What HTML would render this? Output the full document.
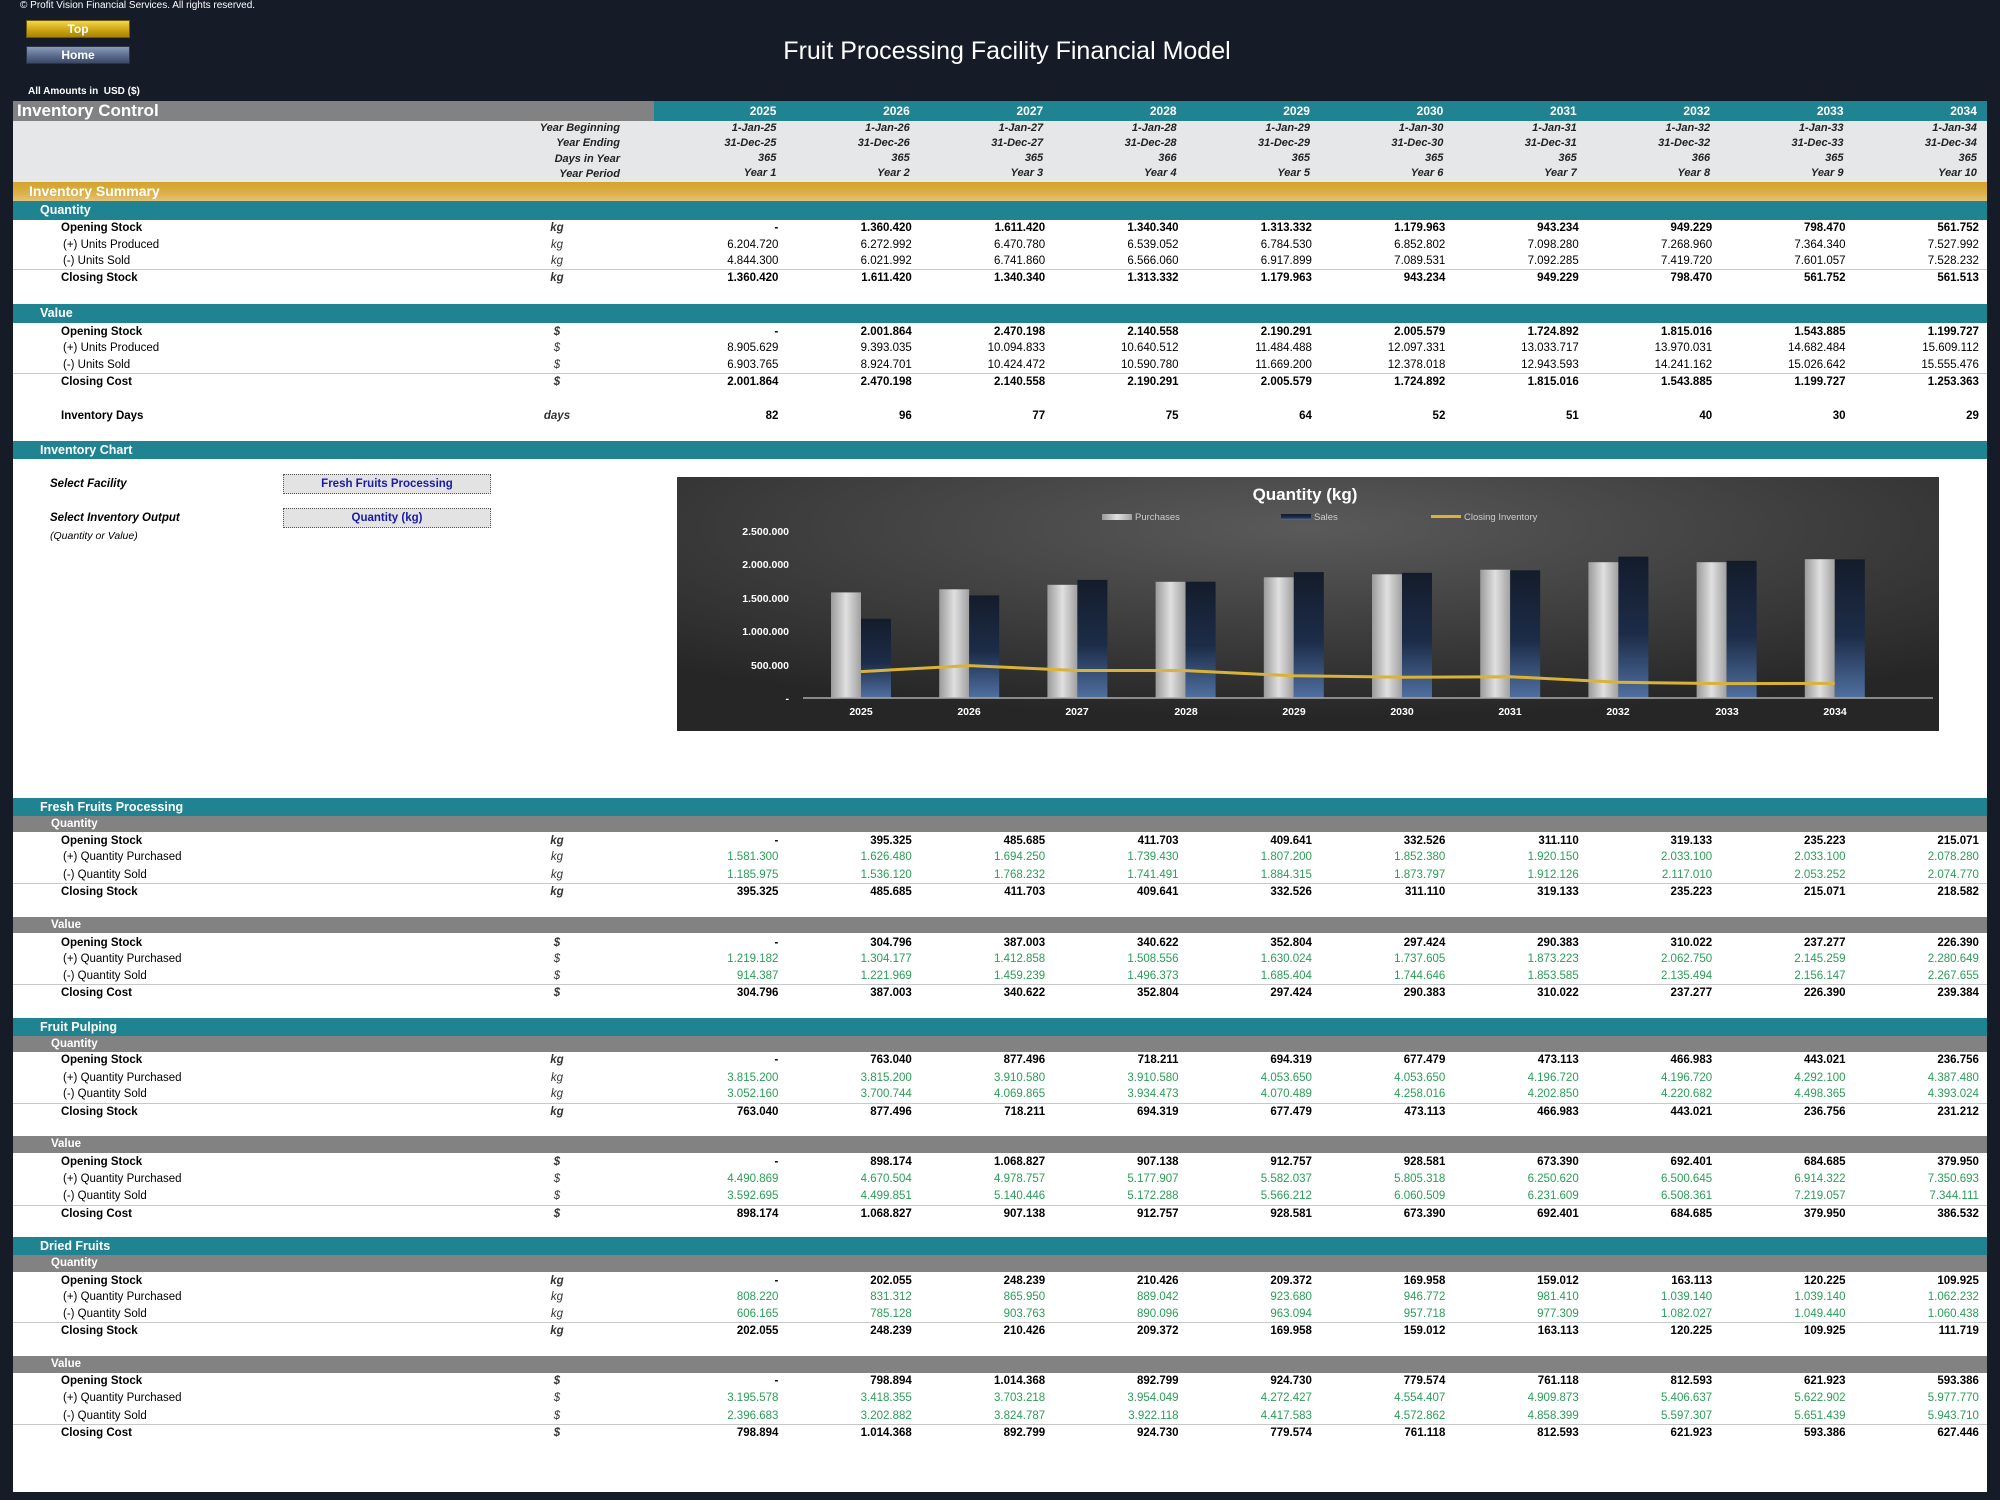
<!DOCTYPE html>
<html><head><meta charset="utf-8"><style>
*{margin:0;padding:0;box-sizing:border-box}
body{width:2000px;height:1500px;background:#151b27;font-family:"Liberation Sans",sans-serif;position:relative;overflow:hidden;color:#000}
.a{position:absolute}
#page{position:absolute;left:13px;top:101px;width:1974px;height:1391px;background:#fff}
.bar{position:absolute;left:13px;width:1974px;color:#fff;font-weight:bold}
.teal{background:#1f8391}
.gray{background:#828282}
.r{position:absolute;left:13px;width:1974px;height:17px;line-height:17px;font-size:11.5px}
.r .l{position:absolute;left:48px}
.r .i{left:50px}
.r .u{position:absolute;left:534px;width:20px;text-align:center;font-style:italic;color:#333}
.r .n{position:absolute;left:634px;display:grid;grid-template-columns:repeat(10,133.4px)}
.r .n span{text-align:right;padding-right:2px}
.b{font-weight:bold}
.g .n span{color:#2a9d57}
.ln{border-top:1px solid #c8c8c8}
.hd{position:absolute;left:634px;display:grid;grid-template-columns:repeat(10,133.4px);font-style:italic;font-weight:bold;font-size:11px;color:#222}
.hd span{text-align:right;padding-right:4px}
</style></head><body>
<div class="a" style="left:20px;top:0;font-size:10px;color:#fff">© Profit Vision Financial Services. All rights reserved.</div>
<div class="a" style="left:26px;top:20px;width:104px;height:18px;background:linear-gradient(#f6d64a,#c9a010 60%,#a88308);border:1px solid #6b5a10;color:#fff;font-weight:bold;font-size:12px;text-align:center;line-height:17px">Top</div>
<div class="a" style="left:26px;top:46px;width:104px;height:18px;background:linear-gradient(#8b9bb8,#56678a 60%,#3b4966);border:1px solid #2a3448;color:#fff;font-weight:bold;font-size:12px;text-align:center;line-height:17px">Home</div>
<div class="a" style="left:0;width:2000px;top:37px;text-align:center;font-size:25px;color:#fff;padding-left:14px">Fruit Processing Facility Financial Model</div>
<div class="a" style="left:28px;top:86px;font-size:10px;color:#fff;font-weight:bold">All Amounts in&nbsp; USD ($)</div>
<div id="page"></div>

<div class="bar gray" style="top:101px;height:20px;width:641px;font-size:17px;line-height:20px;padding-left:4px">Inventory Control</div>
<div class="bar teal" style="top:101px;height:20px;left:654px;width:1333px"></div>
<div class="hd" style="left:647px;top:101px;line-height:20px;color:#fff;font-style:normal;font-size:12px"><span>2025</span><span>2026</span><span>2027</span><span>2028</span><span>2029</span><span>2030</span><span>2031</span><span>2032</span><span>2033</span><span>2034</span></div>
<div class="a" style="left:13px;top:121px;width:1974px;height:61px;background:#e6e7e9"></div>
<div class="a" style="left:400px;top:121px;width:220px;text-align:right;font-style:italic;font-weight:bold;font-size:11px;line-height:15.3px;color:#222">Year Beginning<br>Year Ending<br>Days in Year<br>Year Period</div>
<div class="hd" style="left:647px;top:121px;line-height:15.3px"><span>1-Jan-25</span><span>1-Jan-26</span><span>1-Jan-27</span><span>1-Jan-28</span><span>1-Jan-29</span><span>1-Jan-30</span><span>1-Jan-31</span><span>1-Jan-32</span><span>1-Jan-33</span><span>1-Jan-34</span></div>
<div class="hd" style="left:647px;top:136px;line-height:15.3px"><span>31-Dec-25</span><span>31-Dec-26</span><span>31-Dec-27</span><span>31-Dec-28</span><span>31-Dec-29</span><span>31-Dec-30</span><span>31-Dec-31</span><span>31-Dec-32</span><span>31-Dec-33</span><span>31-Dec-34</span></div>
<div class="hd" style="left:647px;top:151px;line-height:15.3px"><span>365</span><span>365</span><span>365</span><span>366</span><span>365</span><span>365</span><span>365</span><span>366</span><span>365</span><span>365</span></div>
<div class="hd" style="left:647px;top:166px;line-height:15.3px"><span>Year 1</span><span>Year 2</span><span>Year 3</span><span>Year 4</span><span>Year 5</span><span>Year 6</span><span>Year 7</span><span>Year 8</span><span>Year 9</span><span>Year 10</span></div>

<div class="bar" style="top:182px;height:19px;background:linear-gradient(#d4a32a,#dcb04a 60%,#e3c27a);font-size:14px;line-height:19px;padding-left:16px">Inventory Summary</div>
<div class="bar teal" style="top:201px;height:19px;font-size:12.5px;line-height:19px;padding-left:27px">Quantity</div>
<div class="r b" style="top:220px"><span class="l">Opening Stock</span><span class="u">kg</span><div class="n"><span>-</span><span>1.360.420</span><span>1.611.420</span><span>1.340.340</span><span>1.313.332</span><span>1.179.963</span><span>943.234</span><span>949.229</span><span>798.470</span><span>561.752</span></div></div>
<div class="r" style="top:237px"><span class="l i">(+) Units Produced</span><span class="u">kg</span><div class="n"><span>6.204.720</span><span>6.272.992</span><span>6.470.780</span><span>6.539.052</span><span>6.784.530</span><span>6.852.802</span><span>7.098.280</span><span>7.268.960</span><span>7.364.340</span><span>7.527.992</span></div></div>
<div class="r" style="top:253px"><span class="l i">(-) Units Sold</span><span class="u">kg</span><div class="n"><span>4.844.300</span><span>6.021.992</span><span>6.741.860</span><span>6.566.060</span><span>6.917.899</span><span>7.089.531</span><span>7.092.285</span><span>7.419.720</span><span>7.601.057</span><span>7.528.232</span></div></div>
<div class="r b ln" style="top:269px"><span class="l">Closing Stock</span><span class="u">kg</span><div class="n"><span>1.360.420</span><span>1.611.420</span><span>1.340.340</span><span>1.313.332</span><span>1.179.963</span><span>943.234</span><span>949.229</span><span>798.470</span><span>561.752</span><span>561.513</span></div></div>

<div class="bar teal" style="top:304px;height:19px;font-size:12.5px;line-height:19px;padding-left:27px">Value</div>
<div class="r b" style="top:324px"><span class="l">Opening Stock</span><span class="u">$</span><div class="n"><span>-</span><span>2.001.864</span><span>2.470.198</span><span>2.140.558</span><span>2.190.291</span><span>2.005.579</span><span>1.724.892</span><span>1.815.016</span><span>1.543.885</span><span>1.199.727</span></div></div>
<div class="r" style="top:340px"><span class="l i">(+) Units Produced</span><span class="u">$</span><div class="n"><span>8.905.629</span><span>9.393.035</span><span>10.094.833</span><span>10.640.512</span><span>11.484.488</span><span>12.097.331</span><span>13.033.717</span><span>13.970.031</span><span>14.682.484</span><span>15.609.112</span></div></div>
<div class="r" style="top:357px"><span class="l i">(-) Units Sold</span><span class="u">$</span><div class="n"><span>6.903.765</span><span>8.924.701</span><span>10.424.472</span><span>10.590.780</span><span>11.669.200</span><span>12.378.018</span><span>12.943.593</span><span>14.241.162</span><span>15.026.642</span><span>15.555.476</span></div></div>
<div class="r b ln" style="top:373px"><span class="l">Closing Cost</span><span class="u">$</span><div class="n"><span>2.001.864</span><span>2.470.198</span><span>2.140.558</span><span>2.190.291</span><span>2.005.579</span><span>1.724.892</span><span>1.815.016</span><span>1.543.885</span><span>1.199.727</span><span>1.253.363</span></div></div>
<div class="r b" style="top:408px"><span class="l">Inventory Days</span><span class="u" style="font-weight:bold;left:527px;width:34px">days</span><div class="n"><span>82</span><span>96</span><span>77</span><span>75</span><span>64</span><span>52</span><span>51</span><span>40</span><span>30</span><span>29</span></div></div>

<div class="bar teal" style="top:441px;height:18px;font-size:12.5px;line-height:18px;padding-left:27px">Inventory Chart</div>
<div class="a" style="left:50px;top:478px;font-size:11.5px;font-weight:bold;font-style:italic">Select Facility</div>
<div class="a" style="left:283px;top:474px;width:208px;height:20px;background:#e3e3e3;border:1px dotted #555;color:#1a1aa8;font-weight:bold;font-size:11.5px;text-align:center;line-height:18px">Fresh Fruits Processing</div>
<div class="a" style="left:50px;top:512px;font-size:11.5px;font-weight:bold;font-style:italic">Select Inventory Output</div>
<div class="a" style="left:50px;top:530px;font-size:10.5px;font-style:italic">(Quantity or Value)</div>
<div class="a" style="left:283px;top:508px;width:208px;height:20px;background:#e3e3e3;border:1px dotted #555;color:#1a1aa8;font-weight:bold;font-size:11.5px;text-align:center;line-height:18px">Quantity (kg)</div>

<svg class="a" style="left:677px;top:477px" width="1262" height="254" viewBox="0 0 1262 254">
<defs>
<radialGradient id="bg" cx="50%" cy="20%" r="75%"><stop offset="0" stop-color="#5a5a5a"/><stop offset="1" stop-color="#262626"/></radialGradient>
<linearGradient id="pg" x1="0" x2="1"><stop offset="0" stop-color="#9a9a9a"/><stop offset=".5" stop-color="#e0e0e0"/><stop offset="1" stop-color="#a0a0a0"/></linearGradient>
<linearGradient id="sg" x1="0" y1="0" x2="0" y2="1"><stop offset="0" stop-color="#141c2a"/><stop offset=".55" stop-color="#1c2c48"/><stop offset="1" stop-color="#5070a0"/></linearGradient>
</defs>
<rect width="1262" height="254" fill="url(#bg)"/>
<text x="628" y="23" text-anchor="middle" fill="#fff" font-size="17" font-weight="bold">Quantity (kg)</text>
<rect x="425" y="37" width="30" height="6" fill="url(#pg)"/><text x="458" y="43" fill="#ccc" font-size="9.5">Purchases</text>
<rect x="604" y="37" width="30" height="6" fill="url(#sg)"/><text x="637" y="43" fill="#ccc" font-size="9.5">Sales</text>
<rect x="754" y="38" width="30" height="3" fill="#d9b23a"/><text x="787" y="43" fill="#ccc" font-size="9.5">Closing Inventory</text>
<g fill="#fff" font-size="10.5" font-weight="bold" text-anchor="end">
<text x="112" y="58">2.500.000</text><text x="112" y="91">2.000.000</text><text x="112" y="125">1.500.000</text><text x="112" y="158">1.000.000</text><text x="112" y="192">500.000</text><text x="112" y="225">-</text></g>
<g fill="url(#pg)">
<rect x="154" y="115.4" width="30" height="105.6"/><rect x="262.2" y="112.3" width="30" height="108.7"/><rect x="370.4" y="107.8" width="30" height="113.2"/><rect x="478.6" y="104.8" width="30" height="116.2"/><rect x="586.8" y="100.3" width="30" height="120.7"/><rect x="695" y="97.3" width="30" height="123.7"/><rect x="803.2" y="92.7" width="30" height="128.3"/><rect x="911.4" y="85.2" width="30" height="135.8"/><rect x="1019.6" y="85.2" width="30" height="135.8"/><rect x="1127.8" y="82.2" width="30" height="138.8"/></g>
<g fill="url(#sg)">
<rect x="184" y="141.8" width="30" height="79.2"/><rect x="292.2" y="118.4" width="30" height="102.6"/><rect x="400.4" y="102.9" width="30" height="118.1"/><rect x="508.6" y="104.7" width="30" height="116.3"/><rect x="616.8" y="95.1" width="30" height="125.9"/><rect x="725" y="95.8" width="30" height="125.2"/><rect x="833.2" y="93.3" width="30" height="127.7"/><rect x="941.4" y="79.6" width="30" height="141.4"/><rect x="1049.6" y="83.8" width="30" height="137.2"/><rect x="1157.8" y="82.4" width="30" height="138.6"/></g>
<line x1="126" y1="221" x2="1256" y2="221" stroke="#aaa" stroke-width="1.5"/>
<polyline points="184,194.6 292.2,188.6 400.4,193.5 508.6,193.6 616.8,198.8 725,200.2 833.2,199.7 941.4,205.3 1049.6,206.6 1157.8,206.4" fill="none" stroke="#d9b23a" stroke-width="3"/>
<g fill="#fff" font-size="10.5" font-weight="bold" text-anchor="middle">
<text x="184" y="238">2025</text><text x="292" y="238">2026</text><text x="400" y="238">2027</text><text x="509" y="238">2028</text><text x="617" y="238">2029</text><text x="725" y="238">2030</text><text x="833" y="238">2031</text><text x="941" y="238">2032</text><text x="1050" y="238">2033</text><text x="1158" y="238">2034</text></g>
</svg>

<!-- Fresh Fruits -->
<div class="bar teal" style="top:798px;height:18px;font-size:12.5px;line-height:18px;padding-left:27px">Fresh Fruits Processing</div>
<div class="bar gray" style="top:816px;height:16px;font-size:11.5px;line-height:16px;padding-left:38px">Quantity</div>
<div class="r b" style="top:833px"><span class="l">Opening Stock</span><span class="u">kg</span><div class="n"><span>-</span><span>395.325</span><span>485.685</span><span>411.703</span><span>409.641</span><span>332.526</span><span>311.110</span><span>319.133</span><span>235.223</span><span>215.071</span></div></div>
<div class="r g" style="top:849px"><span class="l i">(+) Quantity Purchased</span><span class="u">kg</span><div class="n"><span>1.581.300</span><span>1.626.480</span><span>1.694.250</span><span>1.739.430</span><span>1.807.200</span><span>1.852.380</span><span>1.920.150</span><span>2.033.100</span><span>2.033.100</span><span>2.078.280</span></div></div>
<div class="r g" style="top:867px"><span class="l i">(-) Quantity Sold</span><span class="u">kg</span><div class="n"><span>1.185.975</span><span>1.536.120</span><span>1.768.232</span><span>1.741.491</span><span>1.884.315</span><span>1.873.797</span><span>1.912.126</span><span>2.117.010</span><span>2.053.252</span><span>2.074.770</span></div></div>
<div class="r b ln" style="top:883px"><span class="l">Closing Stock</span><span class="u">kg</span><div class="n"><span>395.325</span><span>485.685</span><span>411.703</span><span>409.641</span><span>332.526</span><span>311.110</span><span>319.133</span><span>235.223</span><span>215.071</span><span>218.582</span></div></div>
<div class="bar gray" style="top:917px;height:16px;font-size:11.5px;line-height:16px;padding-left:38px">Value</div>
<div class="r b" style="top:935px"><span class="l">Opening Stock</span><span class="u">$</span><div class="n"><span>-</span><span>304.796</span><span>387.003</span><span>340.622</span><span>352.804</span><span>297.424</span><span>290.383</span><span>310.022</span><span>237.277</span><span>226.390</span></div></div>
<div class="r g" style="top:951px"><span class="l i">(+) Quantity Purchased</span><span class="u">$</span><div class="n"><span>1.219.182</span><span>1.304.177</span><span>1.412.858</span><span>1.508.556</span><span>1.630.024</span><span>1.737.605</span><span>1.873.223</span><span>2.062.750</span><span>2.145.259</span><span>2.280.649</span></div></div>
<div class="r g" style="top:968px"><span class="l i">(-) Quantity Sold</span><span class="u">$</span><div class="n"><span>914.387</span><span>1.221.969</span><span>1.459.239</span><span>1.496.373</span><span>1.685.404</span><span>1.744.646</span><span>1.853.585</span><span>2.135.494</span><span>2.156.147</span><span>2.267.655</span></div></div>
<div class="r b ln" style="top:984px"><span class="l">Closing Cost</span><span class="u">$</span><div class="n"><span>304.796</span><span>387.003</span><span>340.622</span><span>352.804</span><span>297.424</span><span>290.383</span><span>310.022</span><span>237.277</span><span>226.390</span><span>239.384</span></div></div>

<!-- Fruit Pulping -->
<div class="bar teal" style="top:1018px;height:18px;font-size:12.5px;line-height:18px;padding-left:27px">Fruit Pulping</div>
<div class="bar gray" style="top:1036px;height:16px;font-size:11.5px;line-height:16px;padding-left:38px">Quantity</div>
<div class="r b" style="top:1052px"><span class="l">Opening Stock</span><span class="u">kg</span><div class="n"><span>-</span><span>763.040</span><span>877.496</span><span>718.211</span><span>694.319</span><span>677.479</span><span>473.113</span><span>466.983</span><span>443.021</span><span>236.756</span></div></div>
<div class="r g" style="top:1070px"><span class="l i">(+) Quantity Purchased</span><span class="u">kg</span><div class="n"><span>3.815.200</span><span>3.815.200</span><span>3.910.580</span><span>3.910.580</span><span>4.053.650</span><span>4.053.650</span><span>4.196.720</span><span>4.196.720</span><span>4.292.100</span><span>4.387.480</span></div></div>
<div class="r g" style="top:1086px"><span class="l i">(-) Quantity Sold</span><span class="u">kg</span><div class="n"><span>3.052.160</span><span>3.700.744</span><span>4.069.865</span><span>3.934.473</span><span>4.070.489</span><span>4.258.016</span><span>4.202.850</span><span>4.220.682</span><span>4.498.365</span><span>4.393.024</span></div></div>
<div class="r b ln" style="top:1103px"><span class="l">Closing Stock</span><span class="u">kg</span><div class="n"><span>763.040</span><span>877.496</span><span>718.211</span><span>694.319</span><span>677.479</span><span>473.113</span><span>466.983</span><span>443.021</span><span>236.756</span><span>231.212</span></div></div>
<div class="bar gray" style="top:1136px;height:17px;font-size:11.5px;line-height:17px;padding-left:38px">Value</div>
<div class="r b" style="top:1154px"><span class="l">Opening Stock</span><span class="u">$</span><div class="n"><span>-</span><span>898.174</span><span>1.068.827</span><span>907.138</span><span>912.757</span><span>928.581</span><span>673.390</span><span>692.401</span><span>684.685</span><span>379.950</span></div></div>
<div class="r g" style="top:1171px"><span class="l i">(+) Quantity Purchased</span><span class="u">$</span><div class="n"><span>4.490.869</span><span>4.670.504</span><span>4.978.757</span><span>5.177.907</span><span>5.582.037</span><span>5.805.318</span><span>6.250.620</span><span>6.500.645</span><span>6.914.322</span><span>7.350.693</span></div></div>
<div class="r g" style="top:1188px"><span class="l i">(-) Quantity Sold</span><span class="u">$</span><div class="n"><span>3.592.695</span><span>4.499.851</span><span>5.140.446</span><span>5.172.288</span><span>5.566.212</span><span>6.060.509</span><span>6.231.609</span><span>6.508.361</span><span>7.219.057</span><span>7.344.111</span></div></div>
<div class="r b ln" style="top:1205px"><span class="l">Closing Cost</span><span class="u">$</span><div class="n"><span>898.174</span><span>1.068.827</span><span>907.138</span><span>912.757</span><span>928.581</span><span>673.390</span><span>692.401</span><span>684.685</span><span>379.950</span><span>386.532</span></div></div>

<!-- Dried Fruits -->
<div class="bar teal" style="top:1237px;height:18px;font-size:12.5px;line-height:18px;padding-left:27px">Dried Fruits</div>
<div class="bar gray" style="top:1255px;height:17px;font-size:11.5px;line-height:17px;padding-left:38px">Quantity</div>
<div class="r b" style="top:1273px"><span class="l">Opening Stock</span><span class="u">kg</span><div class="n"><span>-</span><span>202.055</span><span>248.239</span><span>210.426</span><span>209.372</span><span>169.958</span><span>159.012</span><span>163.113</span><span>120.225</span><span>109.925</span></div></div>
<div class="r g" style="top:1289px"><span class="l i">(+) Quantity Purchased</span><span class="u">kg</span><div class="n"><span>808.220</span><span>831.312</span><span>865.950</span><span>889.042</span><span>923.680</span><span>946.772</span><span>981.410</span><span>1.039.140</span><span>1.039.140</span><span>1.062.232</span></div></div>
<div class="r g" style="top:1306px"><span class="l i">(-) Quantity Sold</span><span class="u">kg</span><div class="n"><span>606.165</span><span>785.128</span><span>903.763</span><span>890.096</span><span>963.094</span><span>957.718</span><span>977.309</span><span>1.082.027</span><span>1.049.440</span><span>1.060.438</span></div></div>
<div class="r b ln" style="top:1322px"><span class="l">Closing Stock</span><span class="u">kg</span><div class="n"><span>202.055</span><span>248.239</span><span>210.426</span><span>209.372</span><span>169.958</span><span>159.012</span><span>163.113</span><span>120.225</span><span>109.925</span><span>111.719</span></div></div>
<div class="bar gray" style="top:1356px;height:17px;font-size:11.5px;line-height:17px;padding-left:38px">Value</div>
<div class="r b" style="top:1373px"><span class="l">Opening Stock</span><span class="u">$</span><div class="n"><span>-</span><span>798.894</span><span>1.014.368</span><span>892.799</span><span>924.730</span><span>779.574</span><span>761.118</span><span>812.593</span><span>621.923</span><span>593.386</span></div></div>
<div class="r g" style="top:1390px"><span class="l i">(+) Quantity Purchased</span><span class="u">$</span><div class="n"><span>3.195.578</span><span>3.418.355</span><span>3.703.218</span><span>3.954.049</span><span>4.272.427</span><span>4.554.407</span><span>4.909.873</span><span>5.406.637</span><span>5.622.902</span><span>5.977.770</span></div></div>
<div class="r g" style="top:1408px"><span class="l i">(-) Quantity Sold</span><span class="u">$</span><div class="n"><span>2.396.683</span><span>3.202.882</span><span>3.824.787</span><span>3.922.118</span><span>4.417.583</span><span>4.572.862</span><span>4.858.399</span><span>5.597.307</span><span>5.651.439</span><span>5.943.710</span></div></div>
<div class="r b ln" style="top:1424px"><span class="l">Closing Cost</span><span class="u">$</span><div class="n"><span>798.894</span><span>1.014.368</span><span>892.799</span><span>924.730</span><span>779.574</span><span>761.118</span><span>812.593</span><span>621.923</span><span>593.386</span><span>627.446</span></div></div>
</body></html>
